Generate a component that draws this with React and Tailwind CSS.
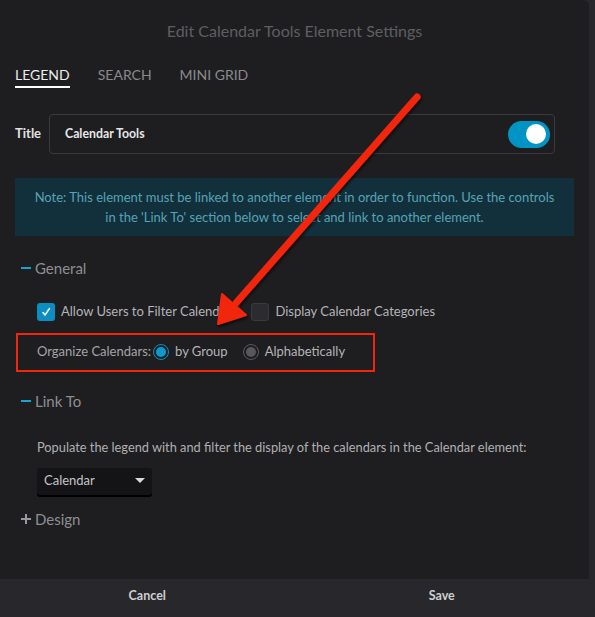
import React, { useState } from 'react';

const font = { fontFamily: 'Lato, "Open Sans", sans-serif' };

const SectionHeader = ({ open, label }) => (
    <div className="flex items-center h-4 text-[15px] leading-4 text-[#8e8e92]">
        {open ? (
            <span className="inline-block w-[10px] h-[2px] bg-[#14a4d8] ml-[6px] mr-[4px]" />
        ) : (
            <svg className="ml-[6px] mr-[4px]" width="10" height="10" viewBox="0 0 10 10">
                <path d="M5 0 V10 M0 5 H10" stroke="#9a9a9e" strokeWidth="2" />
            </svg>
        )}
        {label}
    </div>
);

const Checkbox = ({ checked, label }) => (
    <label className="flex items-center gap-[6px] text-[13px] text-[#b4b4b8]">
        <span className={`w-[18px] h-[18px] rounded-[3px] flex items-center justify-center ${checked ? 'bg-[#0b8fc3]' : 'bg-[#2c2c30] border border-[#3a3a3e]'}`}>
            {checked && (
                <svg width="10" height="10" viewBox="0 0 10 10">
                    <path d="M2 5.5 L4 8 L8.5 1.5" stroke="white" strokeWidth="1.5" fill="none" strokeLinecap="round" />
                </svg>
            )}
        </span>
        {label}
    </label>
);

const Radio = ({ checked, label }) => (
    <label className="flex items-center gap-[6px] text-[13px] text-[#b4b4b8]">
        <span className={`w-[16px] h-[16px] rounded-full flex items-center justify-center border ${checked ? 'border-[#0b8fc3]' : 'border-[#5a5a5e]'}`}>
            <span className={`w-[10px] h-[10px] rounded-full ${checked ? 'bg-[#0b9ad0]' : 'bg-[#58585c]'}`} />
        </span>
        {label}
    </label>
);

export default function App() {
    const [tab] = useState('LEGEND');
    const tabs = ['LEGEND', 'SEARCH', 'MINI GRID'];

    return (
        <div className="relative w-[595px] h-[617px] flex flex-col bg-[#28282c] overflow-hidden" style={font}>
            <div className="flex-1 w-[589px] bg-[#1e1e20] rounded-tr-[6px] px-[15px]">
                <h1 className="pt-[22px] text-[16px] leading-[18px] text-center text-[#5e5e62]">
                    Edit Calendar Tools Element Settings
                </h1>

                {/* tabs */}
                <div className="flex gap-[28px] mt-[26px]">
                    {tabs.map((t) => (
                        <div
                            key={t}
                            className={`text-[14px] leading-[18px] pb-[2px] border-b-2 ${t === tab ? 'text-[#ececec] border-white' : 'text-[#8a8a8e] border-transparent'}`}
                        >
                            {t}
                        </div>
                    ))}
                </div>

                {/* title row */}
                <div className="flex items-center mt-[26px]">
                    <span className="w-[34px] text-[13px] font-bold text-[#e2e2e2]">Title</span>
                    <div className="flex items-center justify-between w-[506px] h-[40px] border border-[#3a3a3e] rounded-[4px] pl-[15px] pr-[4px]">
                        <span className="text-[12.3px] font-bold text-[#e6e6e6]">Calendar Tools</span>
                        <div className="w-[42px] h-[27px] rounded-full bg-[#0094c4] flex items-center justify-end pr-[4px]">
                            <span className="w-[20px] h-[20px] rounded-full bg-white" />
                        </div>
                    </div>
                </div>

                {/* note */}
                <div className="mt-[24px] bg-[#12303b] py-[9px] text-center text-[13px] leading-[20px] text-[#58a2b6]">
                    Note: This element must be linked to another element in order to function. Use the controls<br />
                    in the 'Link To' section below to select and link to another element.
                </div>

                <div className="mt-[24px]">
                    <SectionHeader open label="General" />
                </div>

                <div className="flex gap-[15px] mt-[26px] pl-[22px]">
                    <Checkbox checked label="Allow Users to Filter Calendars" />
                    <Checkbox label="Display Calendar Categories" />
                </div>

                <div className="mt-[11px] ml-[1px] w-[359px] h-[39px] border-2 border-[#f2260c] flex items-center pl-[19px] gap-[1px]">
                    <span className="text-[13px] text-[#a4a4a8] mr-[1px]">Organize Calendars:</span>
                    <Radio checked label="by Group" />
                    <span className="w-[13px]" />
                    <Radio label="Alphabetically" />
                </div>

                <div className="mt-[21px]">
                    <SectionHeader open label="Link To" />
                </div>

                <p className="mt-[30px] pl-[22px] text-[12.8px] leading-4 text-[#b0b0b4]">
                    Populate the legend with and filter the display of the calendars in the Calendar element:
                </p>

                <div className="mt-[13px] ml-[22px] w-[115px] h-[27px] bg-[#141416] rounded-[3px] shadow-[0_2px_0_#000] flex items-center justify-between px-[7px] text-[13px] text-[#c4c4c8]">
                    Calendar
                    <svg width="10" height="6" viewBox="0 0 10 6">
                        <path d="M0 0 H10 L5 5 Z" fill="#d8d8d8" />
                    </svg>
                </div>

                <div className="mt-[16px]">
                    <SectionHeader label="Design" />
                </div>
            </div>

            {/* footer */}
            <div className="h-[38px] flex rounded-br-[10px] bg-[#28282c] pb-[4px] pr-[6px]">
                <button className="flex-1 text-[12.5px] font-bold text-[#cfcfd2]">Cancel</button>
                <button className="flex-1 text-[12.5px] font-bold text-[#cfcfd2]">Save</button>
            </div>

            {/* annotation arrow */}
            <svg className="absolute inset-0 pointer-events-none" width="595" height="617">
                <defs>
                    <filter id="sh" x="-20%" y="-20%" width="140%" height="140%">
                        <feDropShadow dx="1" dy="2" stdDeviation="1.5" floodColor="#000" floodOpacity="0.7" />
                    </filter>
                </defs>
                <g filter="url(#sh)">
                    <line x1="417" y1="97" x2="236" y2="303" stroke="#f2260c" strokeWidth="7" strokeLinecap="round" />
                    <polygon points="218,324 222,294 246,315" fill="#f2260c" stroke="#f2260c" strokeWidth="2" strokeLinejoin="round" />
                </g>
            </svg>
        </div>
    );
}
